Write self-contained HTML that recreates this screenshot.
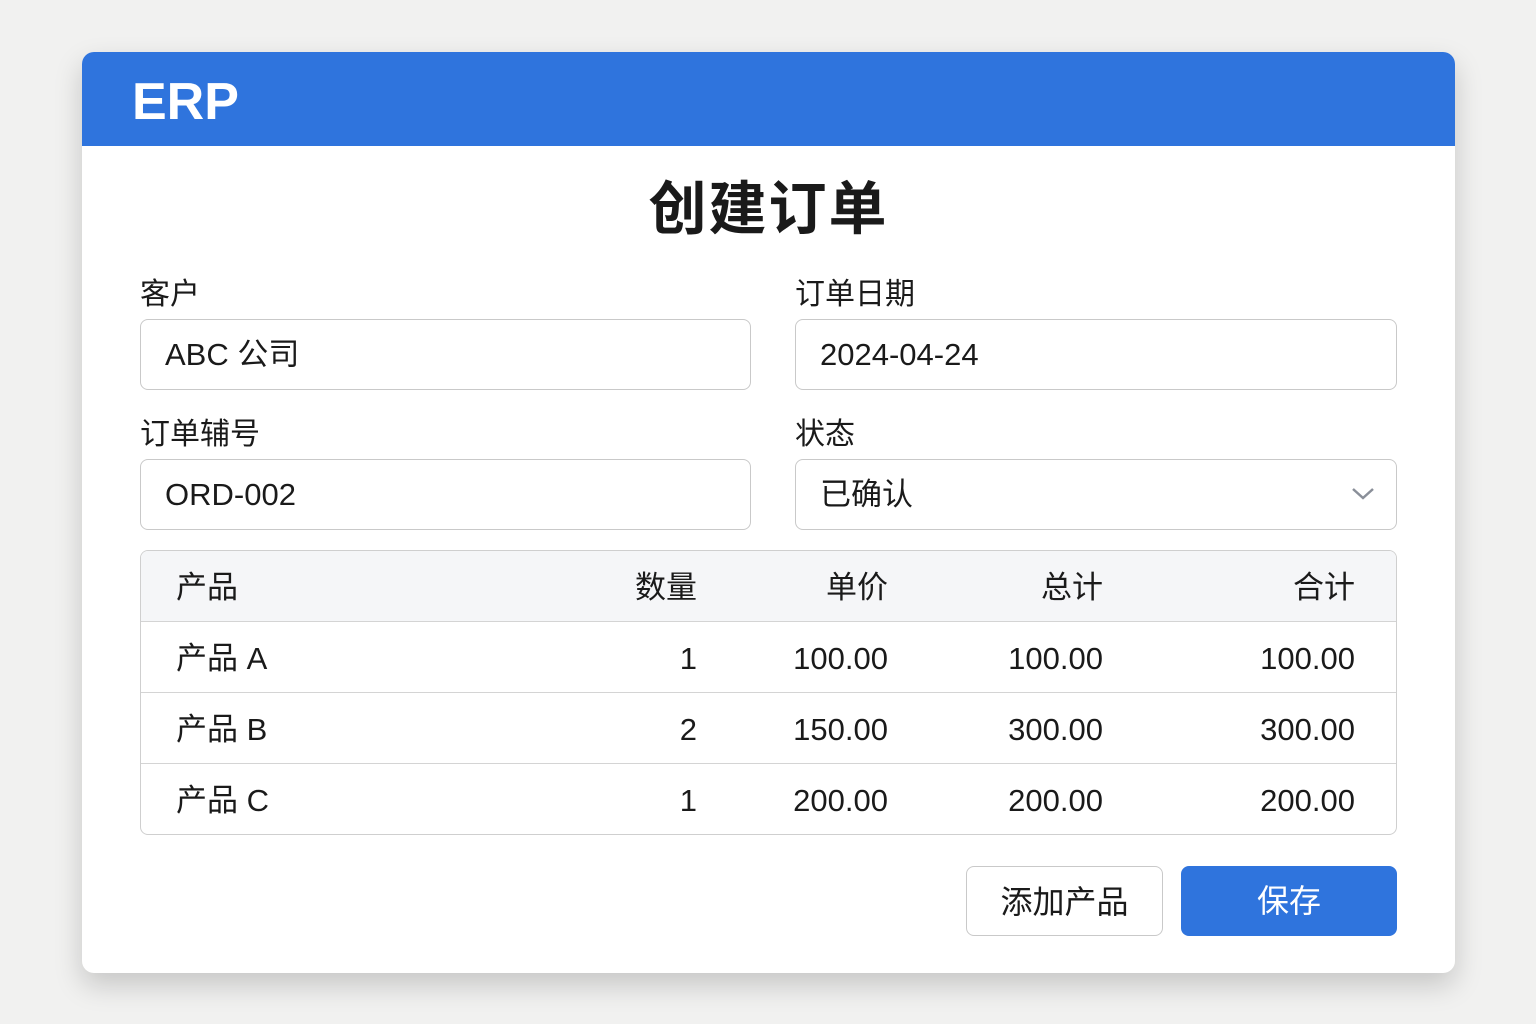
<!DOCTYPE html>
<html><head><meta charset="utf-8"><style>
*{box-sizing:border-box;margin:0;padding:0}
body{width:1536px;height:1024px;background:#f1f1f0;font-family:"Liberation Sans","Noto Sans CJK SC",sans-serif;color:#1a1a1a;position:relative;overflow:hidden}
.card{position:absolute;left:82px;top:52px;width:1373px;height:921px;background:#fff;border-radius:12px;box-shadow:0 12px 28px rgba(0,0,0,.18);overflow:hidden}
.hdr{height:94px;background:#2f74dd;color:#fff;font-weight:bold;font-size:52px;padding-left:50px;line-height:100px}
.abs{position:absolute}
.title{left:0;width:100%;top:122px;text-align:center;font-size:58px;font-weight:bold;line-height:72px;letter-spacing:2px}
.lbl{font-size:30px;line-height:44px}
.inp{border:1.5px solid #c9c9c9;border-radius:8px;height:71px;font-size:31px;line-height:70px;padding-left:24px}
.tbl{left:58px;top:498px;width:1257px;height:285px;border:1.5px solid #cfcfcf;border-radius:8px;overflow:hidden}
.row{position:absolute;left:0;width:100%;height:71px;font-size:31px;line-height:74px}
.row+.row{border-top:1.5px solid #d4d4d4}
.row div{position:absolute;top:0}
.c0{left:35px}
.c1{right:699px}.c2{right:508px}.c3{right:293px}.c4{right:41px}
.btn{top:814px;height:70px;border-radius:8px;font-size:32px;line-height:70px;text-align:center}
</style></head><body>
<div class="card">
<div class="hdr">ERP</div>
<div class="abs title">创建订单</div>
<div class="abs lbl" style="left:58px;top:221px">客户</div>
<div class="abs lbl" style="left:713px;top:221px">订单日期</div>
<div class="abs inp" style="left:58px;top:267px;width:611px">ABC 公司</div>
<div class="abs inp" style="left:713px;top:267px;width:602px">2024-04-24</div>
<div class="abs lbl" style="left:58px;top:361px">订单辅号</div>
<div class="abs lbl" style="left:713px;top:361px">状态</div>
<div class="abs inp" style="left:58px;top:407px;width:611px">ORD-002</div>
<div class="abs inp" style="left:713px;top:407px;width:602px">已确认
<svg style="position:absolute;right:20px;top:26px" width="26" height="16" viewBox="0 0 26 16"><path d="M3 3l10 9 10-9" fill="none" stroke="#8a8f99" stroke-width="2.5"/></svg></div>
<div class="abs tbl">
<div class="row" style="top:0;height:70px;background:#f5f6f8"><div class="c0">产品</div><div class="c1">数量</div><div class="c2">单价</div><div class="c3">总计</div><div class="c4">合计</div></div>
<div class="row" style="top:70px"><div class="c0">产品 A</div><div class="c1">1</div><div class="c2">100.00</div><div class="c3">100.00</div><div class="c4">100.00</div></div>
<div class="row" style="top:141px"><div class="c0">产品 B</div><div class="c1">2</div><div class="c2">150.00</div><div class="c3">300.00</div><div class="c4">300.00</div></div>
<div class="row" style="top:212px"><div class="c0">产品 C</div><div class="c1">1</div><div class="c2">200.00</div><div class="c3">200.00</div><div class="c4">200.00</div></div>
</div>
<div class="abs btn" style="left:884px;width:197px;border:1.5px solid #c9c9c9">添加产品</div>
<div class="abs btn" style="left:1099px;width:216px;background:#2f74dd;color:#fff">保存</div>
</div>
</body></html>
